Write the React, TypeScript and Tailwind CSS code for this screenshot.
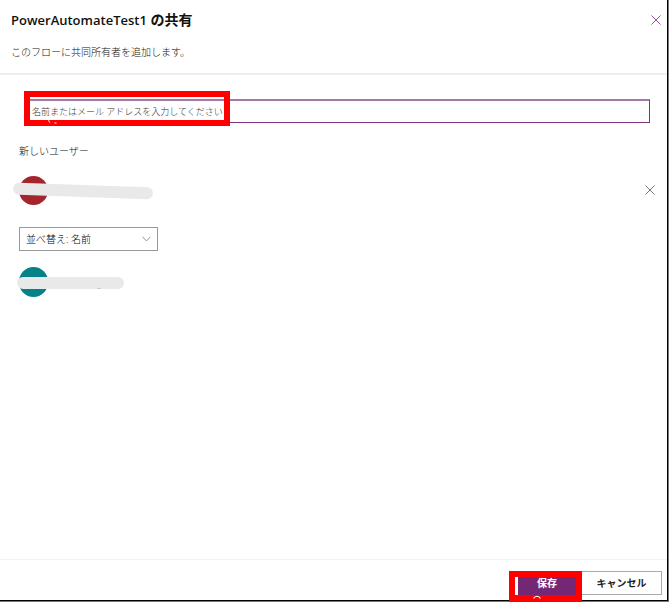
import React, { useState } from 'react';

// shared by the panel close and the row remove buttons
function CrossIcon({ color }: { color: string }) {
  return (
    <svg className="w-[10px] h-[10px]" viewBox="0 0 10 10" fill="none" stroke={color} aria-hidden="true">
      <path d="M0.5 0.5L9.5 9.5M9.5 0.5L0.5 9.5" strokeWidth="1" />
    </svg>
  );
}

export default function App() {
  const [member, setMember] = useState('');
  const [sort, setSort] = useState('name');
  const [newUsers, setNewUsers] = useState([{ id: 1 }]);

  return (
    <div className="min-h-screen flex flex-col border-r border-b border-[#777777] bg-white">
      <main
        lang="ja"
        className="grow flex flex-col border-r border-b border-black text-[#111111] text-[10px] leading-4 font-light font-['Open_Sans','Noto_Sans_CJK_JP',sans-serif]"
      >
        <header className="h-[75px] border-b-2 border-[#eeeeee] pl-[11px] pr-1.5 pt-2.5">
          <div className="flex items-center justify-between">
            <h1 className="text-[14px] leading-5 font-bold text-[#111111]">
              <span className="text-[13px] font-semibold">PowerAutomateTest1</span> の共有
            </h1>
            <button type="button" aria-label="閉じる" className="w-[10px] h-5 flex items-center justify-center">
              <CrossIcon color="#a04aa8" />
            </button>
          </div>
          <p className="mt-[14px]">このフローに共同所有者を追加します。</p>
        </header>

        <section className="grow pl-[19px] pr-3 pt-6">
          <form className="relative ml-[5px] mr-[5px]">
            <input
              type="text"
              aria-label="共同所有者"
              placeholder="名前またはメール アドレスを入力してください"
              value={member}
              onChange={(e) => setMember(e.target.value)}
              className="block w-full h-6 px-[7px] border border-t-2 border-[#7b3380] border-t-[#a678a8] text-[9px] leading-4 outline-none placeholder:text-[#333333]"
            />
            <div className="absolute left-0 -top-2 w-[206px] h-[35px] border-6 border-[#ff0000] pointer-events-none">
              <svg className="absolute left-[18px] top-[22px] w-[10px] h-[5px]" viewBox="0 0 10 5" fill="none" stroke="#ffffff" aria-hidden="true">
                <path d="M0.7 0.5C0.7 2 1 3.2 2.2 3.8M6.5 4H8.5" />
              </svg>
            </div>
          </form>

          <h2 className="mt-5">新しいユーザー</h2>
          <ul>
            {newUsers.map((user) => (
              <li key={user.id} className="mt-4 h-[30px] flex items-center justify-between">
                <div className="relative w-[29px] h-[29px] rounded-full bg-[#a4262c]">
                  <div className="absolute -left-[6px] top-[9px] w-[140px] h-3 rounded-full bg-[#e9e9e9] rotate-2" />
                </div>
                <button
                  type="button"
                  aria-label="削除"
                  onClick={() => setNewUsers(newUsers.filter((u) => u.id !== user.id))}
                  className="w-[10px] h-5 flex items-center justify-center"
                >
                  <CrossIcon color="#777777" />
                </button>
              </li>
            ))}
          </ul>

          <div className="relative mt-[22px] w-[139px]">
            <select
              aria-label="並べ替え"
              value={sort}
              onChange={(e) => setSort(e.target.value)}
              className="block w-full h-6 pl-1.5 pr-5 appearance-none border border-[#999999] text-black"
            >
              <option value="name">並べ替え: 名前</option>
              <option value="date">並べ替え: 追加日</option>
            </select>
            <svg className="absolute right-[7px] top-[9px] w-[9px] h-[6px] pointer-events-none" viewBox="0 0 9 6" fill="none" stroke="#777777" aria-hidden="true">
              <path d="M0.4 0.7L4.5 4.9L8.6 0.7" strokeWidth="0.8" />
            </svg>
          </div>

          <div className="relative mt-4 w-[29px] h-[30px] rounded-full bg-[#038387]">
            <div className="absolute -left-[2px] top-[10px] w-[107px] h-3 rounded-full bg-[#e9e9e9]" />
            <div className="absolute left-[78px] top-[21px] w-1 h-px bg-[#cccccc]" />
          </div>
        </section>

        <footer className="h-[41px] border-t border-[#f2f2f2] pt-[11px] pr-[5px] flex justify-end items-start">
          <div className="relative pl-[9px] pr-1.5">
            <button type="button" className="block w-[58px] h-6 bg-[#742774] text-white font-bold">保存</button>
            <div className="absolute left-0 top-0 w-[73px] h-[31px] border-6 border-b-7 border-[#ff0000] pointer-events-none">
              <div className="w-[3px] h-full bg-white" />
              <svg className="absolute left-[18px] bottom-[-4px] w-2 h-1" viewBox="0 0 8 4" fill="none" stroke="#ffffff" aria-hidden="true">
                <path d="M0.5 3.5C2 0.5 6 0.5 7.5 3.5" strokeWidth="1.2" />
              </svg>
            </div>
          </div>
          <button type="button" className="w-20 h-6 border border-l-0 border-[#aaaaaa] text-[#222222] font-bold">キャンセル</button>
        </footer>
      </main>
    </div>
  );
}
